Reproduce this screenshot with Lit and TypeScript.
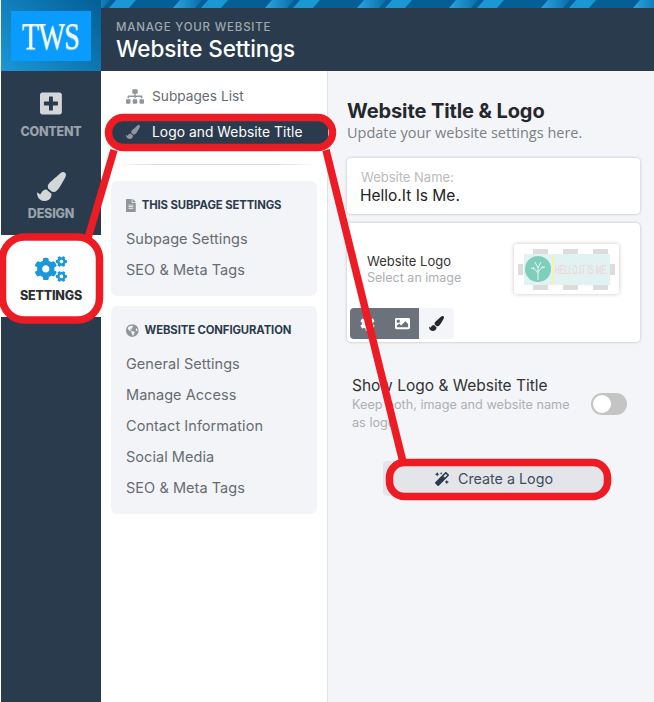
import { LitElement, html, css, svg } from "lit";
import { customElement } from "lit/decorators.js";

const ICONS = {
  plus: ["0 0 448 512", "M400 32H48C21.5 32 0 53.5 0 80v352c0 26.5 21.5 48 48 48h352c26.5 0 48-21.5 48-48V80c0-26.5-21.5-48-48-48zm-32 252c0 6.6-5.4 12-12 12h-92v92c0 6.6-5.4 12-12 12h-56c-6.6 0-12-5.4-12-12v-92H92c-6.6 0-12-5.4-12-12v-56c0-6.6 5.4-12 12-12h92v-92c0-6.6 5.4-12 12-12h56c6.6 0 12 5.4 12 12v92h92c6.6 0 12 5.4 12 12v56z"],
  brush: ["0 0 512 512", "M167.02 309.34c-40.12 2.58-76.53 17.86-97.19 72.3-2.35 6.21-8 9.98-14.59 9.98-11.11 0-45.46-27.67-55.25-34.35C0 439.62 37.93 512 128 512c75.86 0 128-43.77 128-120.19 0-3.11-.65-6.08-.97-9.13l-88.01-73.34zM457.89 0c-15.16 0-29.37 6.71-40.21 16.45C213.27 199.05 192 203.34 192 257.09c0 13.7 3.25 26.76 8.73 38.7l63.82 53.18c7.21 1.8 14.64 3.03 22.39 3.03 62.11 0 98.11-45.47 211.16-256.46 7.38-14.35 13.9-29.85 13.9-45.99C512 20.64 486 0 457.89 0z"],
  cogs: ["0 0 640 512", "M512.1 191l-8.2 14.3c-3 5.3-9.4 7.5-15.1 5.4-11.8-4.4-22.6-10.7-32.1-18.6-4.6-3.8-5.8-10.5-2.8-15.7l8.2-14.3c-6.9-8-12.3-17.3-15.9-27.4h-16.5c-6 0-11.2-4.3-12.2-10.3-2-12-2.1-24.6 0-37.1 1-6 6.2-10.4 12.2-10.4h16.5c3.6-10.1 9-19.4 15.9-27.4l-8.2-14.3c-3-5.2-1.9-11.9 2.8-15.7 9.5-7.9 20.4-14.2 32.1-18.6 5.7-2.1 12.1.1 15.1 5.4l8.2 14.3c10.5-1.9 21.2-1.9 31.7 0L552 6.3c3-5.3 9.4-7.5 15.1-5.4 11.8 4.4 22.6 10.7 32.1 18.6 4.6 3.8 5.8 10.5 2.8 15.7l-8.2 14.3c6.9 8 12.3 17.3 15.9 27.4h16.5c6 0 11.2 4.3 12.2 10.3 2 12 2.1 24.6 0 37.1-1 6-6.2 10.4-12.2 10.4h-16.5c-3.6 10.1-9 19.4-15.9 27.4l8.2 14.3c3 5.2 1.9 11.9-2.8 15.7-9.5 7.9-20.4 14.2-32.1 18.6-5.7 2.1-12.1-.1-15.1-5.4l-8.2-14.3c-10.4 1.9-21.2 1.9-31.7 0zm-10.5-58.8c38.5 29.6 82.4-14.3 52.8-52.8-38.5-29.7-82.4 14.3-52.8 52.8zM386.3 286.1l33.7 16.8c10.1 5.8 14.5 18.1 10.5 29.1-8.9 24.2-26.4 46.4-42.6 65.8-7.4 8.9-20.2 11.1-30.3 5.3l-29.1-16.8c-16 13.7-34.6 24.6-54.9 31.7v33.6c0 11.6-8.3 21.6-19.7 23.6-24.6 4.2-50.4 4.4-75.9 0-11.5-2-20-11.9-20-23.6V418c-20.3-7.2-38.9-18-54.9-31.7L74 403c-10 5.8-22.9 3.6-30.3-5.3-16.2-19.4-33.3-41.6-42.2-65.7-4-10.9.4-23.2 10.5-29.1l33.3-16.8c-3.9-20.9-3.9-42.4 0-63.4L12 205.8c-10.1-5.8-14.6-18.1-10.5-29 8.9-24.2 26-46.4 42.2-65.8 7.4-8.9 20.2-11.1 30.3-5.3l29.1 16.8c16-13.7 34.6-24.6 54.9-31.7V57.1c0-11.5 8.2-21.5 19.6-23.5 24.6-4.2 50.5-4.4 76-.1 11.5 2 20 11.9 20 23.6v33.6c20.3 7.2 38.9 18 54.9 31.7l29.1-16.8c10-5.8 22.9-3.6 30.3 5.3 16.2 19.4 33.2 41.6 42.1 65.8 4 10.9.1 23.2-10 29.1l-33.7 16.8c3.9 21 3.9 42.5 0 63.5zm-117.6 21.1c59.2-77-28.7-164.9-105.7-105.7-59.2 77 28.7 164.9 105.7 105.7zm243.4 182.7l-8.2 14.3c-3 5.3-9.4 7.5-15.1 5.4-11.8-4.4-22.6-10.7-32.1-18.6-4.6-3.8-5.8-10.5-2.8-15.7l8.2-14.3c-6.9-8-12.3-17.3-15.9-27.4h-16.5c-6 0-11.2-4.3-12.2-10.3-2-12-2.1-24.6 0-37.1 1-6 6.2-10.4 12.2-10.4h16.5c3.6-10.1 9-19.4 15.9-27.4l-8.2-14.3c-3-5.2-1.9-11.9 2.8-15.7 9.5-7.9 20.4-14.2 32.1-18.6 5.7-2.1 12.1.1 15.1 5.4l8.2 14.3c10.5-1.9 21.2-1.9 31.7 0l8.2-14.3c3-5.3 9.4-7.5 15.1-5.4 11.8 4.4 22.6 10.7 32.1 18.6 4.6 3.8 5.8 10.5 2.8 15.7l-8.2 14.3c6.9 8 12.3 17.3 15.9 27.4h16.5c6 0 11.2 4.3 12.2 10.3 2 12 2.1 24.6 0 37.1-1 6-6.2 10.4-12.2 10.4h-16.5c-3.6 10.1-9 19.4-15.9 27.4l8.2 14.3c3 5.2 1.9 11.9-2.8 15.7-9.5 7.9-20.4 14.2-32.1 18.6-5.7 2.1-12.1-.1-15.1-5.4l-8.2-14.3c-10.4 1.9-21.2 1.9-31.7 0zM501.6 431c38.5 29.6 82.4-14.3 52.8-52.8-38.5-29.6-82.4 14.3-52.8 52.8z"],
  cog: ["0 0 512 512", "M487.4 315.7l-42.6-24.6c4.3-23.2 4.3-47 0-70.2l42.6-24.6c4.9-2.8 7.1-8.6 5.5-14-11.1-35.6-30-67.8-54.7-94.6-3.8-4.1-10-5.1-14.8-2.3L380.8 110c-17.9-15.4-38.5-27.3-60.8-35.1V25.8c0-5.6-3.9-10.5-9.4-11.7-36.7-8.2-74.3-7.8-109.2 0-5.5 1.2-9.4 6.1-9.4 11.7V75c-22.2 7.9-42.8 19.8-60.8 35.1L88.7 85.5c-4.9-2.8-11-1.9-14.8 2.3-24.7 26.7-43.6 58.9-54.7 94.6-1.7 5.4.6 11.2 5.5 14L67.3 221c-4.3 23.2-4.3 47 0 70.2l-42.6 24.6c-4.9 2.8-7.1 8.6-5.5 14 11.1 35.6 30 67.8 54.7 94.6 3.8 4.1 10 5.1 14.8 2.3l42.6-24.6c17.9 15.4 38.5 27.3 60.8 35.1v49.2c0 5.6 3.9 10.5 9.4 11.7 36.7 8.2 74.3 7.8 109.2 0 5.5-1.2 9.4-6.1 9.4-11.7v-49.2c22.2-7.9 42.8-19.8 60.8-35.1l42.6 24.6c4.9 2.8 11 1.9 14.8-2.3 24.7-26.7 43.6-58.9 54.7-94.6 1.5-5.5-.7-11.3-5.6-14.1zM256 336c-44.1 0-80-35.9-80-80s35.9-80 80-80 80 35.9 80 80-35.9 80-80 80z"],
  sitemap: ["0 0 640 512", "M128 352H32c-17.67 0-32 14.33-32 32v96c0 17.67 14.33 32 32 32h96c17.67 0 32-14.33 32-32v-96c0-17.67-14.33-32-32-32zm-24-80h192v48h48v-48h192v48h48v-57.59c0-21.17-17.23-38.41-38.41-38.41H344v-64h40c17.67 0 32-14.33 32-32V32c0-17.67-14.33-32-32-32H256c-17.67 0-32 14.33-32 32v96c0 17.67 14.33 32 32 32h40v64H94.41C73.23 224 56 241.23 56 262.41V320h48v-48zm264 80h-96c-17.67 0-32 14.33-32 32v96c0 17.67 14.33 32 32 32h96c17.67 0 32-14.33 32-32v-96c0-17.67-14.33-32-32-32zm240 0h-96c-17.67 0-32 14.33-32 32v96c0 17.67 14.33 32 32 32h96c17.67 0 32-14.33 32-32v-96c0-17.67-14.33-32-32-32z"],
  file: ["0 0 384 512", "M224 136V0H24C10.7 0 0 10.7 0 24v464c0 13.3 10.7 24 24 24h336c13.3 0 24-10.7 24-24V160H248c-13.2 0-24-10.8-24-24zm64 236c0 6.6-5.4 12-12 12H108c-6.6 0-12-5.4-12-12v-8c0-6.6 5.4-12 12-12h168c6.6 0 12 5.4 12 12v8zm0-64c0 6.6-5.4 12-12 12H108c-6.6 0-12-5.4-12-12v-8c0-6.6 5.4-12 12-12h168c6.6 0 12 5.4 12 12v8zm0-72v8c0 6.6-5.4 12-12 12H108c-6.6 0-12-5.4-12-12v-8c0-6.6 5.4-12 12-12h168c6.6 0 12 5.4 12 12zm96-114.1v6.1H256V0h6.1c6.4 0 12.5 2.5 17 7l97.9 98c4.5 4.5 7 10.6 7 16.9z"],
  globe: ["0 0 496 512", "M248 8C111.03 8 0 119.03 0 256s111.03 248 248 248 248-111.03 248-248S384.97 8 248 8zm82.29 357.6c-3.9 3.88-7.99 7.95-11.31 11.28-2.99 3-5.1 6.7-6.17 10.71-1.51 5.66-2.73 11.38-4.77 16.87l-17.39 46.85c-13.76 3-28 4.69-42.65 4.69v-27.38c1.69-12.62-7.64-36.26-22.63-51.25-6-6-9.37-14.14-9.37-22.63v-32.01c0-11.64-6.27-22.34-16.46-27.97-14.37-7.95-34.81-19.06-48.81-26.11-11.48-5.78-22.1-13.14-31.65-21.75l-.8-.72a114.792 114.792 0 0 1-18.06-20.74c-9.38-13.77-24.66-36.42-34.59-51.14 20.47-45.5 57.36-82.04 103.2-101.89l24.01 12.01C203.48 89.74 216 82.01 216 70.11v-11.3c7.99-1.29 16.12-2.11 24.39-2.42l28.3 28.3c6.25 6.25 6.25 16.38 0 22.63L264 112l-10.34 10.34c-3.12 3.12-3.12 8.19 0 11.31l4.69 4.69c3.12 3.12 3.12 8.19 0 11.31l-8 8a8.008 8.008 0 0 1-5.66 2.34h-8.99c-2.08 0-4.08.81-5.58 2.27l-9.92 9.65a8.008 8.008 0 0 0-1.58 9.31l15.59 31.19c2.66 5.32-1.21 11.58-7.15 11.58h-5.64c-1.93 0-3.79-.7-5.24-1.96l-9.28-8.06a16.017 16.017 0 0 0-15.55-3.1l-31.17 10.39a11.95 11.95 0 0 0-8.17 11.34c0 4.53 2.56 8.66 6.61 10.69l11.08 5.54c9.41 4.71 19.79 7.16 30.31 7.16s22.59 27.29 32 32h66.75c8.49 0 16.62 3.37 22.63 9.37l13.69 13.69a30.503 30.503 0 0 1 8.93 21.57 46.536 46.536 0 0 1-13.72 32.98zM417 274.25c-5.79-1.45-10.84-5-14.15-9.97l-17.98-26.97a23.97 23.97 0 0 1 0-26.62l19.59-29.38c2.32-3.47 5.5-6.29 9.24-8.15l12.98-6.49C440.2 193.59 448 223.87 448 256c0 8.67-.74 17.16-1.82 25.54L417 274.25z"],
  image: ["0 0 512 512", "M464 448H48c-26.51 0-48-21.49-48-48V112c0-26.51 21.49-48 48-48h416c26.51 0 48 21.49 48 48v288c0 26.51-21.49 48-48 48zM112 120c-30.928 0-56 25.072-56 56s25.072 56 56 56 56-25.072 56-56-25.072-56-56-56zM64 384h384V272l-87.515-87.515c-4.686-4.686-12.284-4.686-16.971 0L208 320l-55.515-55.515c-4.686-4.686-12.284-4.686-16.971 0L64 336v48z"],
  magic: ["0 0 512 512", "M224 96l16-32 32-16-32-16-16-32-16 32-32 16 32 16 16 32zM80 160l26.66-53.33L160 80l-53.34-26.67L80 0 53.34 53.33 0 80l53.34 26.67L80 160zm352 128l-26.66 53.33L352 368l53.34 26.67L432 448l26.66-53.33L512 368l-53.34-26.67L432 288zm70.62-193.77L417.77 9.38C411.53 3.12 403.34 0 395.15 0c-8.19 0-16.38 3.12-22.63 9.38L9.38 372.52c-12.5 12.5-12.5 32.76 0 45.25l84.85 84.85c6.25 6.25 14.44 9.37 22.62 9.37 8.19 0 16.38-3.12 22.63-9.37l363.14-363.15c12.5-12.48 12.5-32.75 0-45.24zM359.45 203.46l-50.91-50.91 86.6-86.6 50.91 50.91-86.6 86.6z"],
};

type IconName = keyof typeof ICONS;

const icon = (name: IconName, cls: string) => html`<svg class=${cls} viewBox=${ICONS[name][0]} fill="currentColor"><path d=${ICONS[name][1]}></path></svg>`;

@customElement("app-root")
export class AppRoot extends LitElement {
  static styles = css`
    :host {
      display: block;
      height: 702px;
      overflow: hidden;
      position: relative;
      background: #fff;
      font-family: Inter, "Noto Sans", sans-serif;
      color: #222;
    }
    * { box-sizing: border-box; }
    .app { display: flex; height: 702px; padding-left: 1px; }

    .rail { width: 100px; background: #2a3b4d; display: flex; flex-direction: column; flex: none; }
    .logo {
      height: 71px;
      background: linear-gradient(45deg, #1a97d6 0%, #045f96 100%);
      display: flex;
      align-items: center;
      justify-content: center;
    }
    .logo-box {
      width: 80px;
      height: 50px;
      background: #0a9bff;
      display: flex;
      align-items: center;
      justify-content: center;
    }
    .logo-box span {
      font-family: "Liberation Serif", serif;
      font-size: 38px;
      line-height: 40px;
      color: #f2fbff;
      letter-spacing: -1px;
      text-shadow: 0 1px 1px #a7dcfb;
      transform: scaleX(0.74);
    }
    .rail-item {
      height: 82px;
      display: flex;
      flex-direction: column;
      align-items: center;
      color: #9aa2ab;
      font-size: 12.5px;
      font-weight: 800;
      letter-spacing: -0.2px;
    }
    .rail-item .ic { height: 35px; margin-top: 15px; margin-bottom: 3px; display: flex; align-items: center; }
    .rail-item svg { height: 25px; color: #d4d7da; }
    .rail-item.design svg { height: 29px; }
    .rail-item.design .ic, .rail-item.settings .ic { margin-top: 16px; margin-bottom: 2px; }
    .rail-item.settings { background: #fff; color: #2d2f33; }
    .rail-item.settings svg { height: 26px; width: 32px; color: #1b98d8; }

    .main { flex: 1; display: flex; flex-direction: column; min-width: 0; }
    .stripes { height: 8px; display: block; width: 100%; flex: none; }
    .header {
      height: 63px;
      background: #2a3b4d;
      padding: 12px 0 0 15px;
      color: #fff;
      flex: none;
    }
    .header small { display: block; font-size: 11.5px; font-weight: 500; letter-spacing: 0.8px; color: #a0a7ae; line-height: 15px; }
    .header h1 { margin: 0; font-size: 22.5px; font-weight: 500; line-height: 27px; letter-spacing: -0.1px; }

    .body { flex: 1; display: flex; min-height: 0; }
    .panel { width: 227px; flex: none; background: #fff; border-right: 1px solid #dfe1e4; padding: 7px 10px 0 10px; }
    .row { display: flex; align-items: center; height: 36px; font-size: 13.7px; color: #666c73; }
    .row .ri { width: 25px; margin-left: 15px; display: flex; margin-right: 1px; }
    .row svg { height: 14px; color: #8f959c; }
    .row svg.map { width: 18px; height: 15px; }
    .row.active {
      height: 23px;
      margin: 7px -12px 0 1px;
      border-radius: 8px;
      background: #2a3b4d;
      color: #fff;
      font-size: 13.8px;
      letter-spacing: 0.05px;
      padding-bottom: 1px;
    }
    .row.active .ri { margin-left: 14px; }
    .divider { height: 1px; margin: 20px 0 16px 4px; background: linear-gradient(90deg, #fff, #d9dbde 20%, #d9dbde 80%, #fff); }
    .group { background: #f3f4f7; border-radius: 6px; margin-bottom: 10px; padding: 14px 0 11px 15px; }
    .group h2 { margin: 0 0 8px; height: 20px; display: flex; align-items: center; font-size: 11.3px; font-weight: 700; color: #2a3b4d; letter-spacing: -0.1px; }
    .group h2 svg { height: 13px; margin-right: 6px; color: #8f959c; }
    .group a { display: flex; align-items: center; height: 31px; font-size: 14.5px; letter-spacing: 0.05px; color: #666c73; }

    .content { flex: 1; background: #f4f5f8; padding: 28px 14px 0 19px; min-width: 0; }
    .content h2 { margin: 0; font-size: 20px; font-weight: 700; color: #24272b; line-height: 24px; letter-spacing: -0.1px; }
    .content .lead { font-family: "Open Sans", sans-serif; font-size: 14.5px; color: #7b8087; line-height: 20px; }
    .card { background: #fff; border-radius: 4px; box-shadow: 0 0 3px rgba(0, 0, 0, 0.25); }
    .name { margin-top: 15px; height: 56px; padding: 12px 14px 0; }
    .name span { display: block; font-size: 13px; color: #b9bbbd; line-height: 14px; }
    .name b { display: block; margin: 1px 0 0 -1px; font-weight: 400; font-size: 15.5px; color: #222; line-height: 21px; }
    .logo-card { margin-top: 9px; height: 119px; padding: 21px 21px 3px 3px; display: flex; flex-direction: column; justify-content: space-between; }
    .logo-top { display: flex; justify-content: space-between; align-items: center; }
    .logo-top .t { padding-left: 17px; }
    .logo-top p { margin: 0; font-size: 13px; color: #333; line-height: 17px; }
    .logo-top .t span { font-size: 12.5px; color: #adafb2; line-height: 15px; display: block; }
    .preview { width: 105px; height: 50px; background: #fff; border-radius: 3px; box-shadow: 0 0 4px rgba(0, 0, 0, 0.22); position: relative; display: flex; align-items: center; justify-content: center; }
    .picture { width: 86px; height: 31px; background: #e0f2f1; display: flex; align-items: center; gap: 1px; position: relative; z-index: 1; }
    .picture svg { width: 26px; height: 26px; margin-left: 1px; flex: none; }
    .picture i { width: 2px; height: 29px; background: #f6f1ab; flex: none; }
    .picture em { display: block; width: 55px; font-style: normal; font-family: "Liberation Sans", sans-serif; font-size: 13px; color: #f5cfd9; white-space: nowrap; transform: scaleX(0.53); transform-origin: left center; }
    .handles { position: absolute; inset: 5px 0 4px 19px; display: grid; grid-template-columns: repeat(3, 15px); gap: 15px; align-content: space-between; }
    .handles b { height: 5px; background: #dcdcdc; }
    .side { position: absolute; top: 20px; width: 5px; height: 11px; background: #dcdcdc; }
    .side.l { left: 4px; }
    .side.r { right: 4px; }
    .seg { display: flex; width: 104px; height: 31px; }
    .seg div { display: flex; align-items: center; justify-content: center; }
    .seg .a { width: 35px; background: #6b727b; color: #fff; border-radius: 4px 0 0 4px; }
    .seg .b { width: 34px; background: #6b727b; color: #fff; }
    .seg .c { width: 35px; background: #f4f5f8; color: #24272b; border-radius: 0 4px 4px 0; }
    .seg svg { height: 15px; }

    .toggle-row { display: flex; justify-content: space-between; margin-top: 33px; padding: 0 13px 0 5px; }
    .toggle-row p { margin: 0; font-size: 15.5px; color: #333; line-height: 21px; }
    .toggle-row span { display: block; width: 228px; font-size: 12.7px; color: #adafb2; line-height: 18px; }
    .switch { width: 36px; height: 22px; margin-top: 18px; background: #c4c4c4; border-radius: 11px; padding: 2px; flex: none; }
    .switch::before { content: ""; display: block; width: 18px; height: 18px; border-radius: 50%; background: #fff; }
    .create {
      margin: 29px 0 0 36px;
      width: 224px;
      height: 35px;
      border-radius: 4px;
      background: #e4e5e8;
      display: flex;
      align-items: center;
      justify-content: center;
      gap: 9px;
      font-size: 14.3px;
      color: #3d4d5e;
      padding-right: 2px;
    }
    .create svg { height: 14px; color: #2a3b4d; }

    .marks { position: absolute; inset: 0; width: 654px; height: 702px; pointer-events: none; }
  `;

  stripes() {
    // stripes come in pairs every 92px: a fading one, then a solid one
    const pairs = [81, 173, 265, 357, 449, 541, 633];
    return html`<svg class="stripes" viewBox="0 0 553 8" preserveAspectRatio="none">
      <defs><linearGradient id="st" x1="0" x2="1"><stop offset="0" stop-color="#2aa5e4"></stop><stop offset="1" stop-color="#0a6ea8"></stop></linearGradient></defs>
      <rect width="553" height="8" fill="#045f96"></rect>
      ${pairs.map((x) => svg`
        <polygon fill="url(#st)" points="${x - 101},8 ${x - 94},0 ${x - 72},0 ${x - 79},8"></polygon>
        <polygon fill="#1b97d6" points="${x - 73},8 ${x - 66},0 ${x - 46},0 ${x - 53},8"></polygon>`)}
    </svg>`;
  }

  render() {
    return html`
      <div class="app">
        <aside class="rail">
          <div class="logo"><div class="logo-box"><span>TWS</span></div></div>
          <div class="rail-item"><div class="ic">${icon("plus", "")}</div>CONTENT</div>
          <div class="rail-item design"><div class="ic">${icon("brush", "")}</div>DESIGN</div>
          <div class="rail-item settings"><div class="ic">${icon("cogs", "")}</div>SETTINGS</div>
        </aside>
        <div class="main">
          ${this.stripes()}
          <header class="header">
            <small>MANAGE YOUR WEBSITE</small>
            <h1>Website Settings</h1>
          </header>
          <div class="body">
            <nav class="panel">
              <div class="row"><span class="ri">${icon("sitemap", "map")}</span>Subpages List</div>
              <div class="row active"><span class="ri">${icon("brush", "")}</span>Logo and Website Title</div>
              <div class="divider"></div>
              <section class="group">
                <h2>${icon("file", "")}THIS SUBPAGE SETTINGS</h2>
                ${["Subpage Settings", "SEO & Meta Tags"].map((t) => html`<a>${t}</a>`)}
              </section>
              <section class="group">
                <h2>${icon("globe", "")}WEBSITE CONFIGURATION</h2>
                ${["General Settings", "Manage Access", "Contact Information", "Social Media", "SEO & Meta Tags"].map((t) => html`<a>${t}</a>`)}
              </section>
            </nav>
            <main class="content">
              <h2>Website Title &amp; Logo</h2>
              <div class="lead">Update your website settings here.</div>
              <div class="card name"><span>Website Name:</span><b>Hello.It Is Me.</b></div>
              <div class="card logo-card">
                <div class="logo-top">
                  <div class="t"><p>Website Logo</p><span>Select an image</span></div>
                  <div class="preview">
                    <div class="handles"><b></b><b></b><b></b><b></b><b></b><b></b></div>
                    <span class="side l"></span><span class="side r"></span>
                    <div class="picture">
                      <svg viewBox="0 0 26 26"><circle cx="13" cy="13" r="13" fill="#7fcdbb"></circle><path d="M13 24V12M13 17 8 11M13 16l5-6M13 12l-3-6M13 12l3-6M9 13l-3-1M17 12l3-1" stroke="#eaf7f3" stroke-width="1" fill="none"></path></svg>
                      <i></i><em>HELLO.IT IS ME.</em>
                    </div>
                  </div>
                </div>
                <div class="seg">
                  <div class="a">${icon("cog", "")}</div>
                  <div class="b">${icon("image", "")}</div>
                  <div class="c">${icon("brush", "")}</div>
                </div>
              </div>
              <div class="toggle-row">
                <div><p>Show Logo &amp; Website Title</p><span>Keep both, image and website name as logo</span></div>
                <div class="switch"></div>
              </div>
              <div class="create">${icon("magic", "")}Create a Logo</div>
            </main>
          </div>
        </div>
      </div>
      <svg class="marks" viewBox="0 0 654 702" fill="none" stroke="#ed1c24" stroke-width="7.5">
        <rect x="2.5" y="237" width="97" height="83" rx="22"></rect>
        <rect x="108.5" y="117.5" width="224" height="30" rx="15"></rect>
        <rect x="389.5" y="462.5" width="218" height="34" rx="15"></rect>
        <path d="M114 150 88 238M326 150 403 462"></path>
      </svg>
    `;
  }
}
